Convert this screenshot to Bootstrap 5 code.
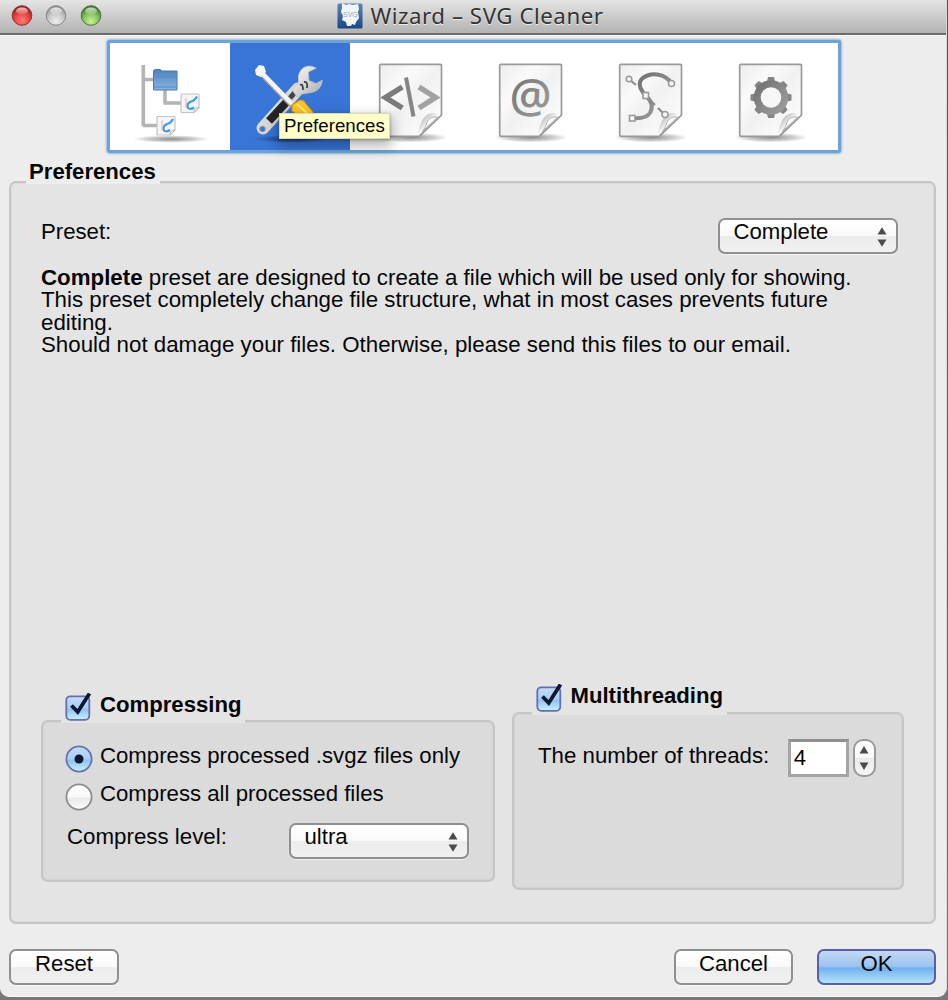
<!DOCTYPE html>
<html lang="en">
<head>
<meta charset="utf-8">
<meta name="viewport" content="width=device-width, initial-scale=1">
<title>Wizard – SVG Cleaner</title>
<link href="https://cdn.jsdelivr.net/npm/bootstrap@5.3.0/dist/css/bootstrap.min.css" rel="stylesheet">
<style>
  html, body { height: 1000px; overflow: hidden; }
  body { background: linear-gradient(#555 0, #777 100%); font: 22.2px/22px "Liberation Sans", Arial, sans-serif; color: #060606; }
  .window { width: 947px; height: 997px; background: #ededed; border-right: 1px solid #d8d8d8; border-bottom: 1px solid #f8f8f8; border-radius: 0 0 9px 9px; }
  .titlebar { height: 35px; background: linear-gradient(#e4e4e4, #b4b4b4 32px); border-bottom: 2px solid #6c6c6c; box-shadow: 0 1px #f8f8f8; padding: 0 0 2px 11px; }
  .lights { width: 92px; gap: 12.3px; margin-right: 234px; }
  .titletext { font: 22.3px/30px "Noto Sans", sans-serif; letter-spacing: .52px; color: #343434; text-shadow: 0 1px #eee; margin-left: 7.5px; white-space: nowrap; }
  .toolbar-frame { width: 734px; height: 113px; margin: 5px 0 0 106.5px; border: 3px solid #6ea3d4; border-radius: 3px; background: #fff; box-shadow: 0 0 2px 1px #94bce0; padding-left: .5px; }
  .tool { width: 120px; height: 107px; }
  .tool.active { background: #3875d7; }
  .tool svg { display: block; }
  .tip { left: 49px; top: 70px; width: 111px; height: 26px; z-index: 3; background: #ffffc7; border: 1px solid #d9d9b4; font-size: 18.7px; line-height: 24px; padding-left: 4px; box-shadow: 0 6px 14px 2px rgba(0,0,0,.28), 0 1px 3px rgba(0,0,0,.3); }
  .legend { position: relative; z-index: 1; background: #ededed; font-weight: 700; font-size: 22.15px; width: fit-content; }
  .main-legend { height: 24px; margin: 7px 0 -3px 26px; padding: 1px 4px 0 3px; }
  .group { border: 2px solid #c6c6c6; border-radius: 7px; box-shadow: inset 0 0 0 1px rgba(0,0,0,.035); }
  .main-group { width: 927px; height: 743px; margin-left: 9px; background: #e4e4e4; padding: 35px 36px 32px 30px; }
  .pop { height: 36px; border: 2px solid #8f8f8f; border-radius: 7px; background: linear-gradient(#fff 0, #fafafa 48%, #ececec 52%, #f1f1f1 100%); box-shadow: 0 1px 1px rgba(255,255,255,.6); color: #060606; line-height: 22px; font-size: 22.2px; }
  .pop-select { width: 180px; padding: 1px 9px 0 13.500px; }
  .pop-select svg { margin-top: 6px; }
  .description { font-size: 22.3px; line-height: 22.4px; margin: 13px 0 0; width: 840px; }
  .box-compress { width: 454px; }
  .box-threads { width: 392px; margin-left: 17px; }
  .sub .legend { background: #e4e4e4; margin: 0 0 -3px 20px; }
  .sub .legend span { margin-left: 7px; padding-top: 1px; }
  .box-threads .legend { padding-bottom: 1px; margin-left: 19.500px; }
  .sub .group { background: #dbdbdb; }
  .c-body { height: 162px; padding: 23px 0 0 22px; }
  .t-body { height: 178px; padding: 25px 0 0 24px; }
  .opt { height: 38px; }
  .opt span { margin-left: 7px; }
  .level { padding: 2px 24px 0 2px; }
  .level > span { padding-top: 3px; font-size: 22.3px; }
  .threads-label { padding-top: 6px; margin-right: 18.500px; white-space: nowrap; font-size: 22.250px; }
  .num { width: 61px; height: 38px; border: 3px solid #a5a5a5; border-top-color: #8f8f8f; background: #fff; line-height: 32px; padding-left: 3px; }
  .spin { width: 23px; height: 38px; border: 2px solid #9a9a9a; border-radius: 10px; background: linear-gradient(#fff, #f8f8f8 49%, #ebebeb 51%, #f6f6f6); margin-left: 4px; }
  .footer { margin: 25px 10px 0 9px; }
  .footer .pop { padding: 0 0 6px; text-align: center; }
  .ok { border-color: #585ea8; background: linear-gradient(#c3d7f3 0, #9cc3f0 48%, #71aff0 53%, #b2e4fb 100%); }
</style>
</head>
<body>
<svg width="0" height="0" class="position-absolute" aria-hidden="true">
  <defs>
    <linearGradient id="paper" x1="0" y1="0" x2="1" y2="1"><stop offset="0" stop-color="#ededed"/><stop offset=".3" stop-color="#fafafa"/><stop offset=".5" stop-color="#f1f1f1"/><stop offset="1" stop-color="#fff"/></linearGradient>
    <linearGradient id="ink" x1="0" y1="0" x2="1" y2="1"><stop offset="0" stop-color="#6d6d6d"/><stop offset="1" stop-color="#a3a3a3"/></linearGradient>
    <linearGradient id="curl" x1="0" y1="0" x2="1" y2="1"><stop offset="0" stop-color="#8c8c8c"/><stop offset=".28" stop-color="#d0d0d0"/><stop offset=".5" stop-color="#fff"/></linearGradient>
    <radialGradient id="shade"><stop offset="0" stop-color="#000" stop-opacity=".45"/><stop offset=".6" stop-color="#000" stop-opacity=".2"/><stop offset="1" stop-color="#000" stop-opacity="0"/></radialGradient>
    <linearGradient id="folder" x1="0" y1="0" x2="0" y2="1"><stop offset="0" stop-color="#4b83bd"/><stop offset="1" stop-color="#8ab4df"/></linearGradient>
    <linearGradient id="steel" x1="0" y1="0" x2="1" y2="1"><stop offset="0" stop-color="#fff"/><stop offset="1" stop-color="#aaa"/></linearGradient>
    <linearGradient id="aqua" x1="0" y1="0" x2="0" y2="1"><stop offset="0" stop-color="#c6dcf7"/><stop offset=".5" stop-color="#a9cef5"/><stop offset=".55" stop-color="#8fc2f4"/><stop offset="1" stop-color="#c8f2ff"/></linearGradient>
    <linearGradient id="knob" x1="0" y1="0" x2="0" y2="1"><stop offset="0" stop-color="#fff"/><stop offset=".5" stop-color="#f8f8f8"/><stop offset=".55" stop-color="#e9e9e9"/><stop offset="1" stop-color="#fdfdfd"/></linearGradient>
    <radialGradient id="red" cx=".5" cy=".75" r=".8"><stop offset="0" stop-color="#ff8378"/><stop offset=".45" stop-color="#ee4540"/><stop offset="1" stop-color="#7d1515"/></radialGradient>
    <radialGradient id="gray" cx=".5" cy=".8" r=".8"><stop offset="0" stop-color="#eee"/><stop offset=".5" stop-color="#c9c9c9"/><stop offset="1" stop-color="#8c8c8c"/></radialGradient>
    <radialGradient id="green" cx=".5" cy=".8" r=".8"><stop offset="0" stop-color="#c8f39a"/><stop offset=".5" stop-color="#85c45d"/><stop offset="1" stop-color="#2f6122"/></radialGradient>
    <linearGradient id="gloss" x1="0" y1="0" x2="0" y2="1"><stop offset="0" stop-color="#fff" stop-opacity=".75"/><stop offset="1" stop-color="#fff" stop-opacity=".1"/></linearGradient>
    <linearGradient id="navy" x1="0" y1="0" x2="0" y2="1"><stop offset="0" stop-color="#5b87b5"/><stop offset="1" stop-color="#184684"/></linearGradient>
    <symbol id="sheet" viewBox="0 0 120 107">
      <ellipse cx="61" cy="94.500" rx="37" ry="5" fill="url(#shade)"/>
      <path d="M31 21.300h59.500q1 0 1 1V72L69 93.300H31q-1.300 0-1.300-1.300V22.300q0-1 1.300-1z" fill="url(#paper)" stroke="#999" stroke-width="1.700"/>
      <path d="M91 72.500Q80 66 73 76Q68 84 68.500 93Z" fill="url(#curl)"/>
      <path d="M87.500 74Q80 73 77 79Q76 84 72.500 88.500Z" fill="#fff" stroke="#b3b3b3" stroke-width="1"/>
      <path d="M91.500 72L69 93.300" stroke="#999" stroke-width="1.700"/>
    </symbol>
    <symbol id="minidoc" viewBox="0 0 20 21">
      <path d="M1.500 1h16.500q1 0 1 1v12.500l-5 5H2q-1 0-1-1V2z" fill="#f5f5f5" stroke="#c4c4c4" stroke-width="1.200"/>
      <path d="M17 3.500Q14.500 8 11 8.500Q6 11 8 15Q10.500 17 14 14.500" fill="none" stroke="#3d9de4" stroke-width="2.200"/>
      <path d="M6 5v10" stroke="#f2a7a7" stroke-width="1"/>
      <path d="M19 14.500l-5 5q-.5-4.500 5-5z" fill="#fff" stroke="#aaa" stroke-width=".8"/>
    </symbol>
    <symbol id="arrows" viewBox="0 0 10 20"><path d="M.5 7.500L5 .3l4.500 7.200zM.5 12.500h9L5 19.700z" fill="#4b4b4b"/></symbol>
    <symbol id="checkbox" viewBox="0 0 28 30">
      <rect x="1.300" y="3.300" width="23" height="23.500" rx="4" fill="url(#aqua)" stroke="#666fae" stroke-width="1.800"/>
      <path d="M6.500 12.500l6.200 6.500L24.500 .5" fill="none" stroke="#0c1830" stroke-width="3.800"/>
    </symbol>
  </defs>
</svg>

<div class="window d-flex flex-column">
  <header class="titlebar d-flex align-items-center flex-shrink-0">
    <div class="lights d-flex flex-shrink-0">
      <svg width="22" height="23" viewBox="0 0 22 23" class="flex-shrink-0"><circle cx="11" cy="11.500" r="9.800" fill="url(#red)" stroke="#8c3333" stroke-width="1"/><ellipse cx="11" cy="7" rx="6" ry="3.500" fill="url(#gloss)"/></svg>
      <svg width="22" height="23" viewBox="0 0 22 23" class="flex-shrink-0"><circle cx="11" cy="11.500" r="9.800" fill="url(#gray)" stroke="#858585" stroke-width="1"/><ellipse cx="11" cy="7" rx="6" ry="3.500" fill="url(#gloss)"/></svg>
      <svg width="22" height="23" viewBox="0 0 22 23" class="flex-shrink-0"><circle cx="11" cy="11.500" r="9.800" fill="url(#green)" stroke="#4a7438" stroke-width="1"/><ellipse cx="11" cy="7" rx="6" ry="3.500" fill="url(#gloss)"/></svg>
    </div>
    <svg width="26" height="26" viewBox="0 0 26 26" class="flex-shrink-0">
      <rect x=".5" y=".5" width="25" height="25" rx="1.500" fill="url(#navy)"/>
      <path d="M5 0l4 2L12 1l4 1 5-1 1 5-1 3 1 6-3 4-1 3-3-1-1 2h-4l-1-4-4-2 1-4-2-4 1-4z" fill="#f1f5f9"/>
      <text x="6" y="14" font-family="Liberation Sans" font-size="7" fill="#91a7c4">SVG</text>
    </svg>
    <div class="titletext">Wizard – SVG Cleaner</div>
  </header>

  <nav class="toolbar-frame d-flex flex-shrink-0">
    <div class="tool">
      <svg width="120" height="107" viewBox="0 0 120 107">
        <ellipse cx="61" cy="96" rx="38" ry="3.800" fill="url(#shade)"/>
        <path d="M33.300 22v61M33 36.500h12M33 82.500h17M55 47v13M53.500 60h18" fill="none" stroke="#b4b4b4" stroke-width="3.600"/>
        <path d="M43.500 28.500q0-2 2-2h4.500q1 0 1.500 1.500h15.500v19H43.500z" fill="url(#folder)" stroke="#4777ab" stroke-width="1"/>
        <path d="M44 34h22.500M44 44h22.500" stroke="#5a8bbf" stroke-width="1.200"/>
        <use href="#minidoc" x="70" y="50" width="20" height="21"/>
        <use href="#minidoc" x="46" y="72.500" width="20" height="21"/>
      </svg>
    </div>
    <div class="tool active position-relative">
      <svg width="120" height="107" viewBox="0 0 120 107">
        <ellipse cx="61" cy="96" rx="38" ry="4" fill="url(#shade)"/>
        <path d="M33 85L68 46" stroke="#d8d8d8" stroke-width="13" stroke-linecap="round"/>
        <path d="M39 78L58 57.500" stroke="#252525" stroke-width="8"/>
        <path d="M60 55L67 47" stroke="#444" stroke-width="5"/>
        <circle cx="32.500" cy="86" r="2.800" fill="#3875d7" stroke="#999" stroke-width="1"/>
        <path d="M67 54Q72 50 79 50Q91 49 92.500 37L86 40.500L79 37.500L78.500 29L86.500 25Q77 20 71 27Q67 32 68.500 39L62 47z" fill="url(#steel)" stroke="#bbb" stroke-width=".7"/>
        <path d="M70 42q3-2 3 5M74 39q4-1 3 6" fill="none" stroke="#333" stroke-width="1.600"/>
        <path d="M29 28L62 62" stroke="#9b9b9b" stroke-width="6"/>
        <path d="M29 27L62 61" stroke="#f5f5f5" stroke-width="4.500"/>
        <path d="M25 27l4-5 5 1 2 6-5 5-5-2z" fill="#f8f8f8"/>
        <path d="M62 62L70 57Q75 57 76 61L83 69V84H72Q68 70 62 68z" fill="#ffc423" stroke="#d99400" stroke-width="1"/>
        <path d="M67 61l13 12" stroke="#ffed7d" stroke-width="2"/>
      </svg>
      <div class="tip position-absolute">Preferences</div>
    </div>
    <div class="tool">
      <svg width="120" height="107" viewBox="0 0 120 107">
        <use href="#sheet" width="120" height="107"/>
        <path d="M52.300 44L35.500 54.500L52.300 65" fill="none" stroke="#7b7b7b" stroke-width="5.500"/>
        <path d="M69 44L85.500 54.500L69 65" fill="none" stroke="#a2a2a2" stroke-width="5.500"/>
        <path d="M56 34.500L63.500 73.500" stroke="#858585" stroke-width="4"/>
      </svg>
    </div>
    <div class="tool">
      <svg width="120" height="107" viewBox="0 0 120 107">
        <use href="#sheet" width="120" height="107"/>
        <text x="60.500" y="69.500" text-anchor="middle" font-family="Open Sans" font-weight="600" font-size="47" fill="url(#ink)">@</text>
      </svg>
    </div>
    <div class="tool">
      <svg width="120" height="107" viewBox="0 0 120 107">
        <use href="#sheet" width="120" height="107"/>
        <path d="M41 38L46 42M49 45L56 52M59 56L65 62M68 65L74 71" stroke="#8c8c8c" stroke-width="2.200"/>
        <path d="M80 38Q72 30 61 31.500Q46 35 51 46Q53 50 56 53Q65 61 60 70Q56 76 43 75" fill="none" stroke="url(#ink)" stroke-width="4"/>
        <g fill="#f8f8f8" stroke="#9a9a9a" stroke-width="1.600"><circle cx="39" cy="36" r="2.800"/><circle cx="81.500" cy="40.500" r="3"/><circle cx="75" cy="71.500" r="3"/><rect x="53" y="49.500" width="5.500" height="6"/><rect x="39.500" y="72.500" width="5.500" height="5.500"/></g>
      </svg>
    </div>
    <div class="tool">
      <svg width="120" height="107" viewBox="0 0 120 107">
        <use href="#sheet" width="120" height="107"/>
        <g fill="#858585" transform="translate(61 54.500)">
          <path id="teeth" d="M-4-16l1-4.500h6l1 4.500v32l-1 4.500h-6l-1-4.500z"/>
          <use href="#teeth" transform="rotate(45)"/>
          <use href="#teeth" transform="rotate(90)"/>
          <use href="#teeth" transform="rotate(135)"/>
          <circle r="17.300" fill="url(#ink)"/>
          <circle r="10.300" fill="#f7f7f7"/>
        </g>
      </svg>
    </div>
  </nav>

  <div class="legend main-legend flex-shrink-0">Preferences</div>
  <main class="group main-group d-flex flex-column flex-shrink-0">
    <div class="d-flex justify-content-between">
      <span class="pt-1" style="margin-top:-1px">Preset:</span>
      <div class="pop pop-select d-flex justify-content-between"><span>Complete</span><svg width="10" height="20"><use href="#arrows" width="10" height="20"/></svg></div>
    </div>
    <p class="description"><b>Complete</b> preset are designed to create a file which will be used only for showing.<br>This preset completely change file structure, what in most cases prevents future<br>editing.<br>Should not damage your files. Otherwise, please send this files to our email.</p>

    <div class="sub d-flex align-items-end mt-auto">
      <section class="box-compress flex-shrink-0 pb-2">
        <div class="legend d-flex ps-1 pe-1"><svg width="28" height="30"><use href="#checkbox" width="28" height="30"/></svg><span>Compressing</span></div>
        <div class="group c-body">
          <div class="opt d-flex"><svg width="28" height="28" viewBox="0 0 28 28"><circle cx="14" cy="14" r="12.600" fill="url(#aqua)" stroke="#6671ad" stroke-width="1.800"/><circle cx="14" cy="14" r="4.500" fill="#0c1830"/></svg><span>Compress processed .svgz files only</span></div>
          <div class="opt d-flex"><svg width="28" height="28" viewBox="0 0 28 28"><circle cx="14" cy="14" r="12.600" fill="url(#knob)" stroke="#8d8d8d" stroke-width="1.800"/></svg><span>Compress all processed files</span></div>
          <div class="level d-flex justify-content-between"><span>Compress level:</span><div class="pop pop-select d-flex justify-content-between"><span>ultra</span><svg width="10" height="20"><use href="#arrows" width="10" height="20"/></svg></div></div>
        </div>
      </section>
      <section class="box-threads flex-shrink-0">
        <div class="legend d-flex ps-1 pe-1"><svg width="28" height="30"><use href="#checkbox" width="28" height="30"/></svg><span>Multithreading</span></div>
        <div class="group t-body d-flex">
          <span class="threads-label">The number of threads:</span>
          <div class="num">4</div>
          <div class="spin d-flex justify-content-center align-items-center"><svg width="10" height="26" viewBox="0 0 10 26"><path d="M.5 8.500L5 1l4.500 7.500zM.5 17.500h9L5 25z" fill="#4b4b4b"/></svg></div>
        </div>
      </section>
    </div>
  </main>

  <footer class="footer d-flex flex-shrink-0">
    <button class="pop" style="width:110px">Reset</button>
    <button class="pop ms-auto" style="width:119px">Cancel</button>
    <button class="pop ok ms-4" style="width:119px">OK</button>
  </footer>
</div>
<script src="https://cdn.jsdelivr.net/npm/bootstrap@5.3.0/dist/js/bootstrap.bundle.min.js"></script>
</body>
</html>
